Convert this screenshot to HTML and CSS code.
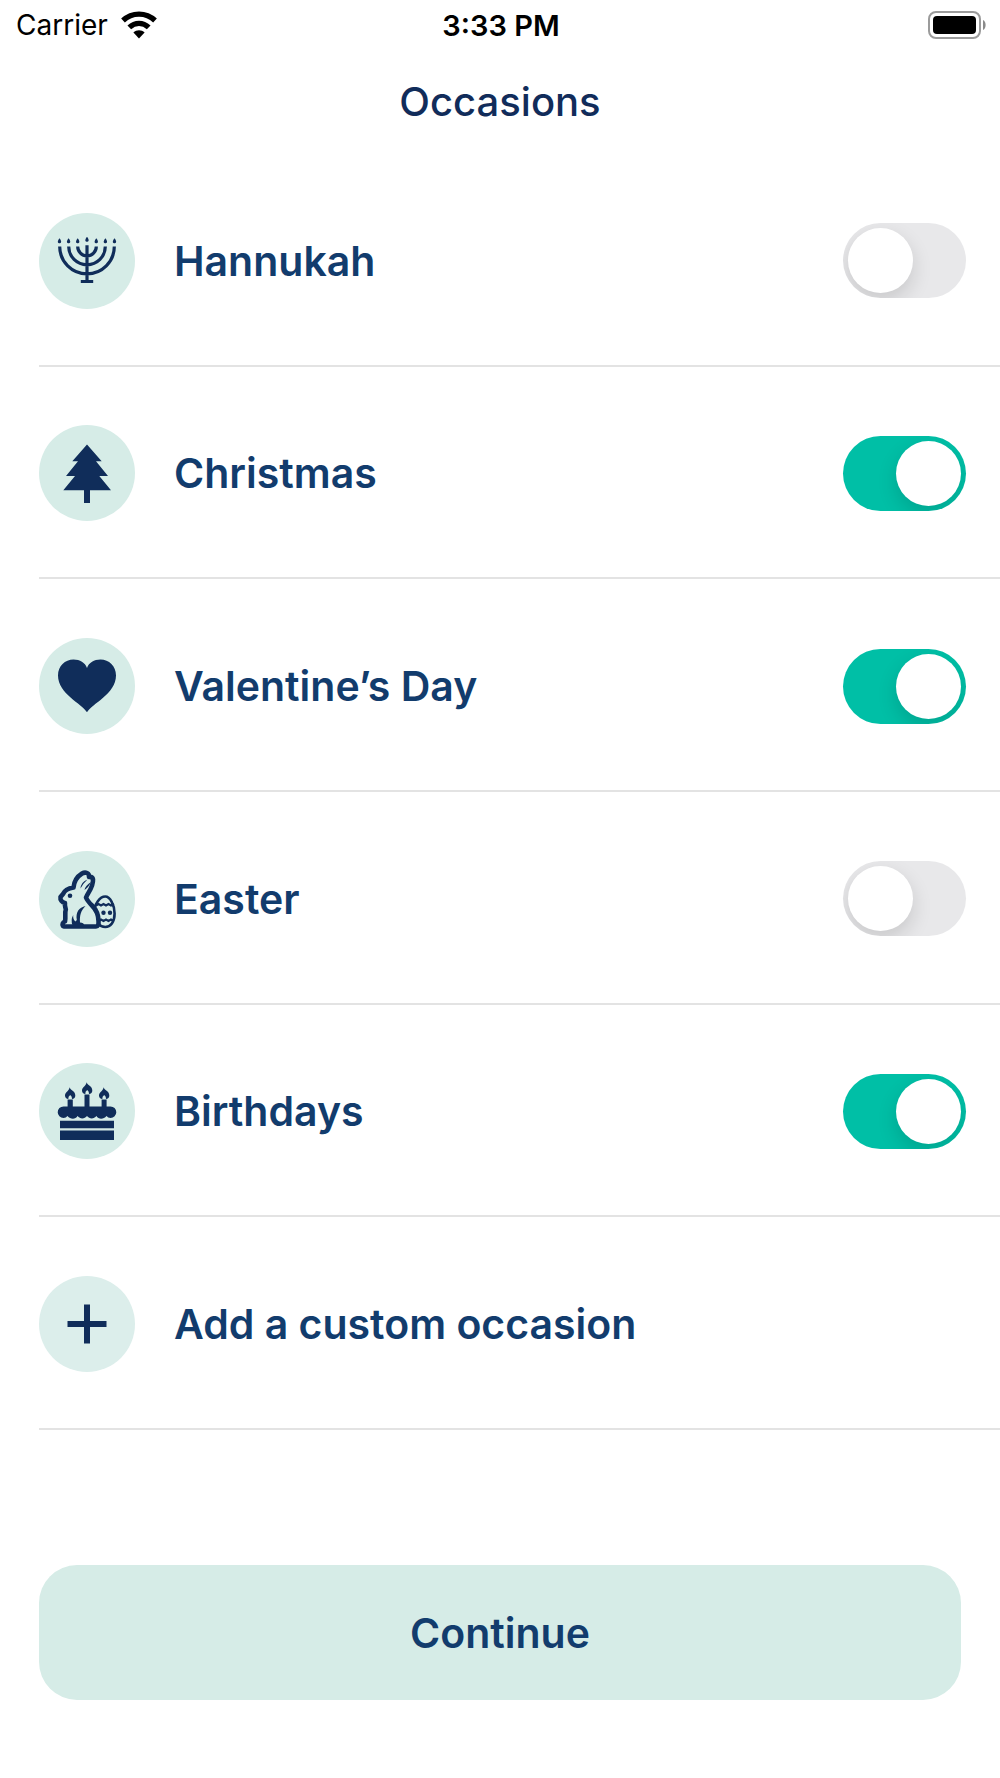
FILE: index.html
```html
<!DOCTYPE html>
<html lang="en">
<head>
    <meta charset="UTF-8">
    <meta name="viewport" content="width=device-width, initial-scale=1.0">
    <title>Occasions</title>
    <link rel="stylesheet" href="styles.css">
</head>
<body>
    <div class="status-bar">
        <div class="carrier">
            <span>Carrier</span>
            <svg class="wifi" viewBox="0 0 38 28" aria-hidden="true">
                <path d="M3 9.5C12 1 26 1 35 9.5" fill="none" stroke="#000" stroke-width="5.4"/>
                <path d="M9.3 16.4C15 11 23 11 28.7 16.4" fill="none" stroke="#000" stroke-width="5.4"/>
                <path d="M13.4 21.6C16.4 18.6 21.6 18.6 24.6 21.6L19 27.4Z"/>
            </svg>
        </div>
        <span class="time">3:33 PM</span>
        <svg class="battery" viewBox="0 0 58 28" aria-hidden="true">
            <rect x="1" y="1" width="51" height="26" rx="7" fill="none" stroke="#9b9b9b" stroke-width="2"/>
            <rect x="5" y="5" width="43" height="18" rx="4"/>
            <path d="M55 9C58.500 10.500 58.500 17.500 55 19Z" fill="#8a8a8a"/>
        </svg>
    </div>

    <header>
        <h1>Occasions</h1>
    </header>

    <main class="occasions">
        <!-- Hannukah -->
        <div class="occasion">
            <svg class="icon" viewBox="0 0 96 96" aria-hidden="true">
                <g class="line">
                    <path d="M20.700 33.500a27.300 27.300 0 0 0 54.600 0M29.700 33.500a18.300 18.300 0 0 0 36.600 0M38.700 33.500a9.300 9.300 0 0 0 18.600 0M48 32.300V69"/>
                    <path d="M41.800 68.500H54.200"/>
                </g>
                <path d="M20.500 25.200c3 3.800 1.300 5 0 5s-3-1.200 0-5M29.600 25.200c3 3.800 1.300 5 0 5s-3-1.200 0-5M38.700 25.200c3 3.800 1.300 5 0 5s-3-1.200 0-5M48 23.700c3 3.800 1.300 5 0 5s-3-1.200 0-5M57.300 25.200c3 3.800 1.300 5 0 5s-3-1.200 0-5M66.400 25.200c3 3.800 1.300 5 0 5s-3-1.200 0-5M75.500 25.200c3 3.800 1.300 5 0 5s-3-1.200 0-5"/>
            </svg>
            <label for="hannukah">Hannukah</label>
            <input type="checkbox" class="switch" id="hannukah">
        </div>

        <!-- Christmas -->
        <div class="occasion">
            <svg class="icon" viewBox="0 0 96 96" aria-hidden="true">
                <path d="M48 19.500L62.700 36.300H57L69 51H60.300L72 65.200H51V78H45V65.200H24.300L36 51H27L39 36.300H33.300Z"/>
            </svg>
            <label for="christmas">Christmas</label>
            <input type="checkbox" class="switch" id="christmas" checked>
        </div>

        <!-- Valentine's Day -->
        <div class="occasion">
            <svg class="icon" viewBox="0 0 96 96" aria-hidden="true">
                <path d="M48 74.300C43 65.500 19 56 19 37.500C19 28 26 21.500 34.500 21.500C41 21.500 46 24.500 48 30C50 24.500 55 21.500 61.500 21.500C70 21.500 77 28 77 37.500C77 56 53 65.500 48 74.300Z"/>
            </svg>
            <label for="valentines">Valentine’s Day</label>
            <input type="checkbox" class="switch" id="valentines" checked>
        </div>

        <!-- Easter -->
        <div class="occasion">
            <svg class="icon" viewBox="0 0 96 96" aria-hidden="true">
                <path class="egg" d="M66.300 45.500C71 45.500 75.600 54 75.600 62.500C75.600 71 71.500 76 66.300 76C61 76 55 71 55 62.500C55 53 61 45.500 66.300 45.500Z"/>
                <path class="band" d="M57 54.500l2.500-1.400 2.500 1.400 2.500-1.400 2.500 1.400 2.500-1.400 2.500 1.400 3-1.400M57 68.500l2.500 1.400 2.500-1.400 2.500 1.400 2.500-1.400 2.500 1.400 2.500-1.400 3 1.400"/>
                <circle cx="64.500" cy="61.700" r="2.200"/>
                <circle cx="71" cy="61.700" r="2.200"/>
                <path class="bunny" d="M25.500 75.500H57Q60 75.500 59.500 70C59.500 63 57.500 59 53 54.500C49.500 51 48 49 47 46.500C49 41.500 54.500 36 54 28.500Q53.500 25.500 50 26C50.500 22 46.500 20.500 43 22.500C37.500 26 35 30.500 34.500 36.500C28.500 37.500 25.500 39.500 24 43L21.500 46C21 49 23 51.500 26 52C25.500 55 26.500 56 26.800 58.500C25.500 62 27 66.500 26 70.500Q22.500 72 24 75Z"/>
                <path d="M48.500 28.500Q42 31 41.500 37.500Q44.500 32 48.500 28.500M52 31Q46 35 45.500 39Q49.500 36.500 52 31M46.500 55C40 56.500 36.500 61 37.800 69L36.500 70.500C34.500 69 34 67 34.200 64Q31.500 69 33.500 74H45Q45 71.500 41 71.500C40.500 64 42 59.500 46.500 55Z"/>
                <circle cx="31" cy="44.700" r="2.300"/>
            </svg>
            <label for="easter">Easter</label>
            <input type="checkbox" class="switch" id="easter">
        </div>

        <!-- Birthdays -->
        <div class="occasion">
            <svg class="icon" viewBox="0 0 96 96" aria-hidden="true">
                <path d="M21 67.500H75V77H21ZM21 57.800H75V65.200H21ZM28.600 36.500H33.800V45H28.600ZM45.500 31.500H50.500V45H45.500ZM62.600 36.500H67.600V45H62.600Z"/>
                <path d="M24.500 43.400H71.500A5.800 5.800 0 0 1 71.500 55Q69 55 67.500 53C64.500 56.500 59.500 56.500 57.500 53C54.500 56.500 50.500 56 48 53C45.500 56 41.500 56.500 38.500 53C36.500 56.500 31.500 56.500 28.500 53Q27 55 24.500 55A5.800 5.800 0 0 1 24.500 43.400Z"/>
                <path d="M30.500 24.300C30.500 28 26 29 26 32.500C26 34.500 27.500 36 29.300 36Q29 33.500 31.200 32Q33.300 33.500 33 36C35 36 36.300 34.500 36.300 32.500C36.300 28 32 28 30.500 24.300ZM47.500 19.300C47.500 23 43 24 43 27.500C43 29.500 44.500 31 46.300 31Q46 28.500 48.200 27Q50.300 28.500 50 31C52 31 53.300 29.500 53.300 27.500C53.300 23 49 23 47.500 19.300ZM64.500 24.300C64.500 28 60 29 60 32.500C60 34.500 61.500 36 63.300 36Q63 33.500 65.200 32Q67.300 33.500 67 36C69 36 70.300 34.500 70.300 32.500C70.300 28 66 28 64.500 24.300Z"/>
            </svg>
            <label for="birthdays">Birthdays</label>
            <input type="checkbox" class="switch" id="birthdays" checked>
        </div>

        <button type="button" class="occasion add">
            <svg class="icon" viewBox="0 0 96 96" aria-hidden="true">
                <path d="M45 28.500H51V45H67.500V51H51V67.500H45V51H28.500V45H45Z"/>
            </svg>
            <span>Add a custom occasion</span>
        </button>
    </main>

    <footer>
        <button type="button" class="continue">Continue</button>
    </footer>
</body>
</html>
```
FILE: styles.css
```css
* {
    box-sizing: border-box;
}
body {
    font-family: Inter, sans-serif;
    background-color: #fff;
    color: #123c6d;
    margin: 0;
    min-height: 100vh;
    display: flex;
    flex-direction: column;
}
/* Status bar */
.status-bar {
    display: grid;
    grid-template-columns: 1fr auto 1fr;
    align-items: center;
    height: 50px;
    padding: 0 14px 0 16px;
    color: #000;
    font-size: 28px;
}
.carrier {
    display: flex;
    align-items: center;
    gap: 12px;
}
.wifi {
    width: 38px;
    height: 28px;
}
.time {
    font-size: 29px;
    font-weight: 600;
}
.battery {
    width: 58px;
    height: 28px;
    justify-self: end;
}
header {
    height: 104px;
    text-align: center;
}
h1 {
    margin: 0;
    color: #112c5a;
    font-size: 40px;
    font-weight: 500;
    line-height: 104px;
}
/* List */
.occasions {
    flex: 1;
    display: grid;
    grid-auto-rows: 1fr;
    padding-left: 39px;
}
.occasion {
    display: flex;
    align-items: center;
    gap: 39px;
    min-height: 140px;
    padding: 3px 34px 0 0;
    border-bottom: 2px solid #e3e3e3;
    font-size: 41px;
    font-weight: 600;
}
.occasion label {
    flex: 1;
}
.icon {
    flex: none;
    width: 96px;
    height: 96px;
    border-radius: 50%;
    background-color: #d6ece7;
    fill: #102d5a;
}
.line {
    fill: none;
    stroke: #102d5a;
    stroke-width: 3.2;
}
.bunny {
    fill: #d6ece7;
    stroke: #102d5a;
    stroke-width: 4.6;
    stroke-linejoin: round;
}
.egg {
    fill: none;
    stroke: #102d5a;
    stroke-width: 2.6;
}
.band {
    fill: none;
    stroke: #102d5a;
    stroke-width: 2.2;
}
/* Switch */
.switch {
    appearance: none;
    flex: none;
    width: 123px;
    height: 75px;
    margin: 0;
    padding: 5px;
    border-radius: 38px;
    background-color: #e8e8ea;
    overflow: hidden;
    cursor: pointer;
}
.switch::before {
    content: "";
    display: block;
    width: 65px;
    height: 65px;
    border-radius: 50%;
    background-color: #fff;
    box-shadow: 0 8px 20px rgba(0, 0, 0, 0.14);
}
.switch:checked {
    background-color: #00bfa6;
}
.switch:checked::before {
    margin-left: auto;
}
/* Buttons */
.add {
    width: 100%;
    border-width: 0 0 2px;
    background: none;
    color: inherit;
    font-family: inherit;
    text-align: left;
    cursor: pointer;
}
.add .icon {
    background-color: #dceeeb;
}
footer {
    padding: 135px 39px 78px;
}
.continue {
    display: block;
    width: 100%;
    height: 135px;
    border: none;
    border-radius: 38px;
    background-color: #d6ece7;
    color: inherit;
    font-family: inherit;
    font-size: 41px;
    font-weight: 600;
    cursor: pointer;
}
```
